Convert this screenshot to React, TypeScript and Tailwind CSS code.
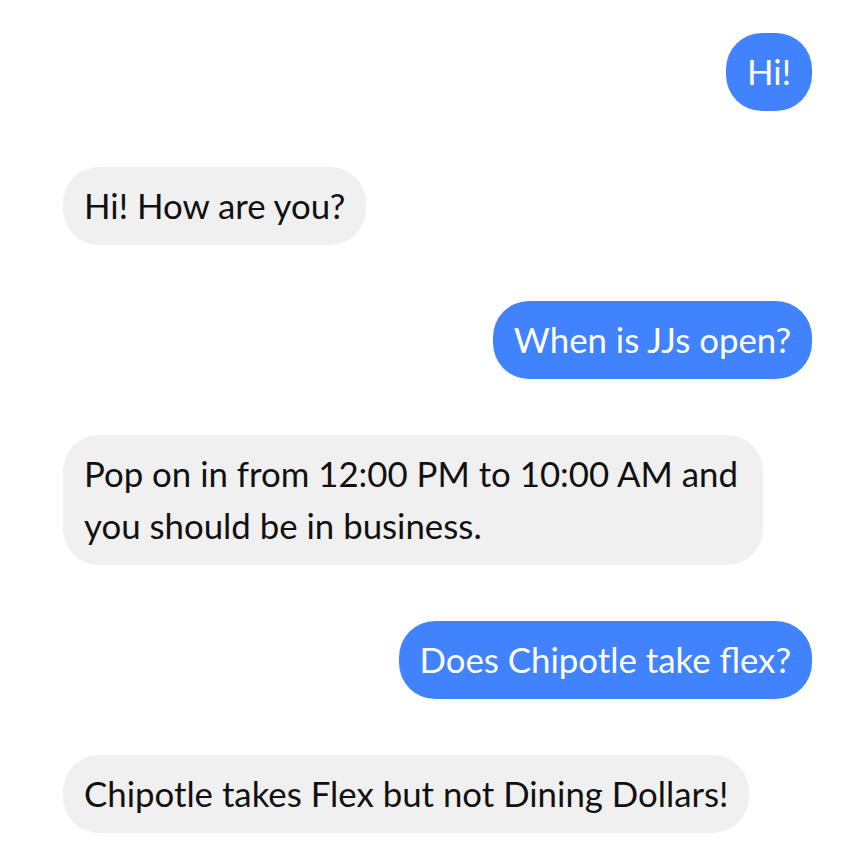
import React from "react";

const msgs: { me: boolean; text: string }[] = [
  { me: true, text: "Hi!" },
  { me: false, text: "Hi! How are you?" },
  { me: true, text: "When is JJs open?" },
  { me: false, text: "Pop on in from 12:00 PM to 10:00 AM and you should be in business." },
  { me: true, text: "Does Chipotle take flex?" },
  { me: false, text: "Chipotle takes Flex but not Dining Dollars!" },
];

export default function App() {
  return (
    <div
      className="min-h-[868px] bg-white pt-[33px] pl-[63px] pr-[56px] flex flex-col gap-[56px]"
      style={{ fontFamily: "Lato, 'Liberation Sans', sans-serif" }}
    >
      {msgs.map((m, i) => (
        <div key={i} className={m.me ? "flex justify-end" : "flex justify-start"}>
          <div
            className={
              (m.me ? "bg-[#4182fe] text-white" : "bg-[#f0f0f0] text-[#111]") +
              " max-w-[700px] rounded-[36px] px-[21px] py-[13px] text-[34.8px] leading-[52px]"
            }
          >
            {m.text}
          </div>
        </div>
      ))}
    </div>
  );
}
